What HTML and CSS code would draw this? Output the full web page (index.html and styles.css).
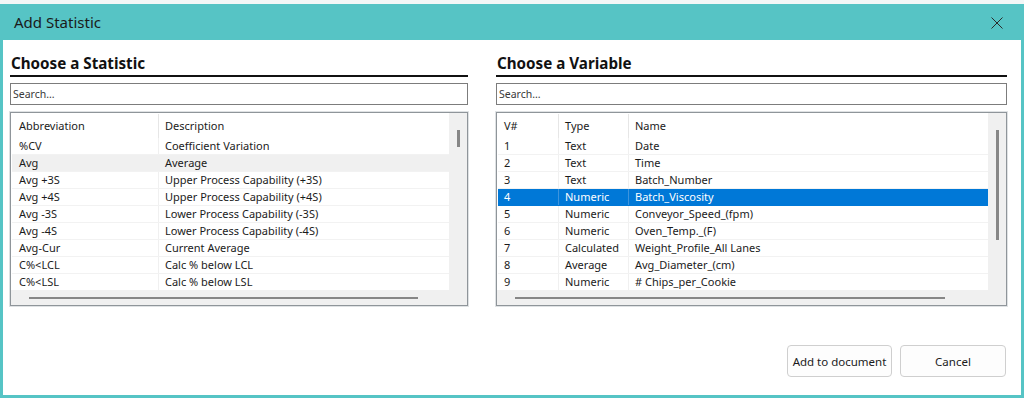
FILE: index.html
```html
<!DOCTYPE html>
<html>
<head>
<meta charset="utf-8">
<link rel="stylesheet" href="styles.css">
</head>
<body>
<div class="topstrip"></div>
<div class="dialog">
  <div class="titlebar">
    <span class="title">Add Statistic</span>
    <svg class="close" width="12" height="12" viewBox="0 0 12 12"><path d="M0.5 0.5 L11.5 11.5 M11.5 0.5 L0.5 11.5" stroke="#2b2b2b" stroke-width="1" fill="none"/></svg>
  </div>
  <div class="content">
    <div class="panels">
      <section class="panel panel-left">
        <h2 class="panel-title">Choose a Statistic</h2>
        <input class="search" type="text" placeholder="Search...">
        <div class="list">
          <div class="list-main">
            <div class="row head stat"><div class="cell">Abbreviation</div><div class="cell">Description</div></div>
            <div class="row stat"><div class="cell">%CV</div><div class="cell">Coefficient Variation</div></div>
            <div class="row stat hover"><div class="cell">Avg</div><div class="cell">Average</div></div>
            <div class="row stat"><div class="cell">Avg +3S</div><div class="cell">Upper Process Capability (+3S)</div></div>
            <div class="row stat"><div class="cell">Avg +4S</div><div class="cell">Upper Process Capability (+4S)</div></div>
            <div class="row stat"><div class="cell">Avg -3S</div><div class="cell">Lower Process Capability (-3S)</div></div>
            <div class="row stat"><div class="cell">Avg -4S</div><div class="cell">Lower Process Capability (-4S)</div></div>
            <div class="row stat"><div class="cell">Avg-Cur</div><div class="cell">Current Average</div></div>
            <div class="row stat"><div class="cell">C%&lt;LCL</div><div class="cell">Calc % below LCL</div></div>
            <div class="row stat"><div class="cell">C%&lt;LSL</div><div class="cell">Calc % below LSL</div></div>
          </div>
          <div class="vscroll"><div class="vthumb short"></div></div>
          <div class="hscroll"><div class="hthumb left-thumb"></div></div>
        </div>
      </section>
      <section class="panel panel-right">
        <h2 class="panel-title">Choose a Variable</h2>
        <input class="search" type="text" placeholder="Search...">
        <div class="list">
          <div class="list-main">
            <div class="row head var"><div class="cell">V#</div><div class="cell">Type</div><div class="cell">Name</div></div>
            <div class="row var"><div class="cell">1</div><div class="cell">Text</div><div class="cell">Date</div></div>
            <div class="row var"><div class="cell">2</div><div class="cell">Text</div><div class="cell">Time</div></div>
            <div class="row var"><div class="cell">3</div><div class="cell">Text</div><div class="cell">Batch_Number</div></div>
            <div class="row var selected"><div class="cell">4</div><div class="cell">Numeric</div><div class="cell">Batch_Viscosity</div></div>
            <div class="row var"><div class="cell">5</div><div class="cell">Numeric</div><div class="cell">Conveyor_Speed_(fpm)</div></div>
            <div class="row var"><div class="cell">6</div><div class="cell">Numeric</div><div class="cell">Oven_Temp._(F)</div></div>
            <div class="row var"><div class="cell">7</div><div class="cell">Calculated</div><div class="cell">Weight_Profile_All Lanes</div></div>
            <div class="row var"><div class="cell">8</div><div class="cell">Average</div><div class="cell">Avg_Diameter_(cm)</div></div>
            <div class="row var"><div class="cell">9</div><div class="cell">Numeric</div><div class="cell"># Chips_per_Cookie</div></div>
          </div>
          <div class="vscroll"><div class="vthumb tall"></div></div>
          <div class="hscroll"><div class="hthumb right-thumb"></div></div>
        </div>
      </section>
    </div>
    <div class="footer">
      <button class="btn">Add to document</button>
      <button class="btn">Cancel</button>
    </div>
  </div>
</div>
</body>
</html>
```

FILE: styles.css
```css
* { box-sizing: border-box; }
html, body { margin: 0; padding: 0; }
body {
  width: 1024px;
  height: 398px;
  overflow: hidden;
  background: #ffffff;
  font-family: "Noto Sans", "Open Sans", sans-serif;
  color: #1b1b1b;
}
.topstrip {
  height: 4px;
  background: #f3f7f7;
}
.dialog {
  height: 394px;
  background: #56c4c5;
  display: flex;
  flex-direction: column;
  padding: 0 3px 3px 3px;
}
.titlebar {
  height: 36px;
  display: flex;
  align-items: center;
  justify-content: space-between;
  padding: 0 18px 0 11px;
  flex: none;
}
.title {
  font-size: 15px;
  color: #1a1a1a;
  margin-top: -1px;
}
.close { display: block; margin-top: 1px; }
.content {
  flex: 1;
  background: #ffffff;
  padding: 0 14px 18px 7px;
  display: flex;
  flex-direction: column;
}
.panels {
  display: grid;
  grid-template-columns: 458px 511px;
  column-gap: 28px;
}
.panel { display: flex; flex-direction: column; }
.panel-title {
  margin: 0;
  padding: 12px 0 0 1px;
  font-size: 15.2px;
  line-height: 23px;
  font-weight: 700;
  color: #111;
  border-bottom: 2px solid #111;
}
.search {
  margin: 6px 0 0 0;
  height: 22px;
  width: 100%;
  border: 1px solid #7c7c7c;
  padding: 0 2px;
  font-family: inherit;
  font-size: 10.5px;
  color: #333;
  outline: none;
  background: #fff;
}
.search::placeholder { color: #3a3a3a; opacity: 1; }
.list {
  margin-top: 7px;
  height: 194px;
  border: 1px solid #8f959a;
  box-shadow: 0 0 0 1px #dfe2e4;
  display: grid;
  grid-template-rows: 177px 1fr;
  background: #f0f0f0;
}
.panel-left .list { grid-template-columns: 438px 1fr; }
.panel-right .list { grid-template-columns: 491px 1fr; }
.list-main {
  background: #fff;
  padding-left: 1px;
  overflow: hidden;
}
.row {
  display: grid;
  height: 17px;
  font-size: 11px;
  align-items: center;
  border-bottom: 1px solid #f2f2f2;
}
.row.head {
  height: 25px;
  border-bottom: none;
  padding-top: 1px;
}
.row.stat { grid-template-columns: 146px 1fr; }
.row.var { grid-template-columns: 60px 70px 1fr; }
.cell {
  padding-left: 7px;
  white-space: nowrap;
  overflow: hidden;
  height: 100%;
  display: flex;
  align-items: center;
  line-height: 16px;
}
.row.var .cell:first-child { padding-left: 6px; }
.cell + .cell { border-left: 1px solid #f0f0f0; padding-left: 6px; }
.row.head .cell + .cell { border-left: 1px solid #e6e6e6; }
.row.hover { background: #f0f0f0; }
.row.selected { background: #0078d7; color: #fff; border-bottom-color: #0078d7; }
.row.selected .cell + .cell { border-left-color: #3d94dd; }
.vscroll {
  background: #f0f0f0;
  display: flex;
  justify-content: center;
  padding-top: 17px;
}
.vthumb { width: 3px; background: #868686; }
.vthumb.short { height: 17px; margin-left: 1px; }
.vthumb.tall { height: 110px; margin-left: 1px; }
.hscroll {
  grid-column: 1 / -1;
  background: #f0f0f0;
  display: flex;
  align-items: center;
  padding-left: 18px;
}
.hthumb { height: 2px; background: #868686; }
.left-thumb { width: 389px; }
.right-thumb { width: 430px; }
.footer {
  margin-top: 39px;
  display: flex;
  justify-content: flex-end;
  gap: 8px;
  padding-right: 1px;
}
.btn {
  width: 105px;
  height: 32px;
  border: 1px solid #cfcfcf;
  border-radius: 4px;
  background: #fdfdfd;
  font-family: inherit;
  font-size: 11.5px;
  color: #1b1b1b;
  padding: 0;
}
.btn + .btn { width: 106px; }
```
